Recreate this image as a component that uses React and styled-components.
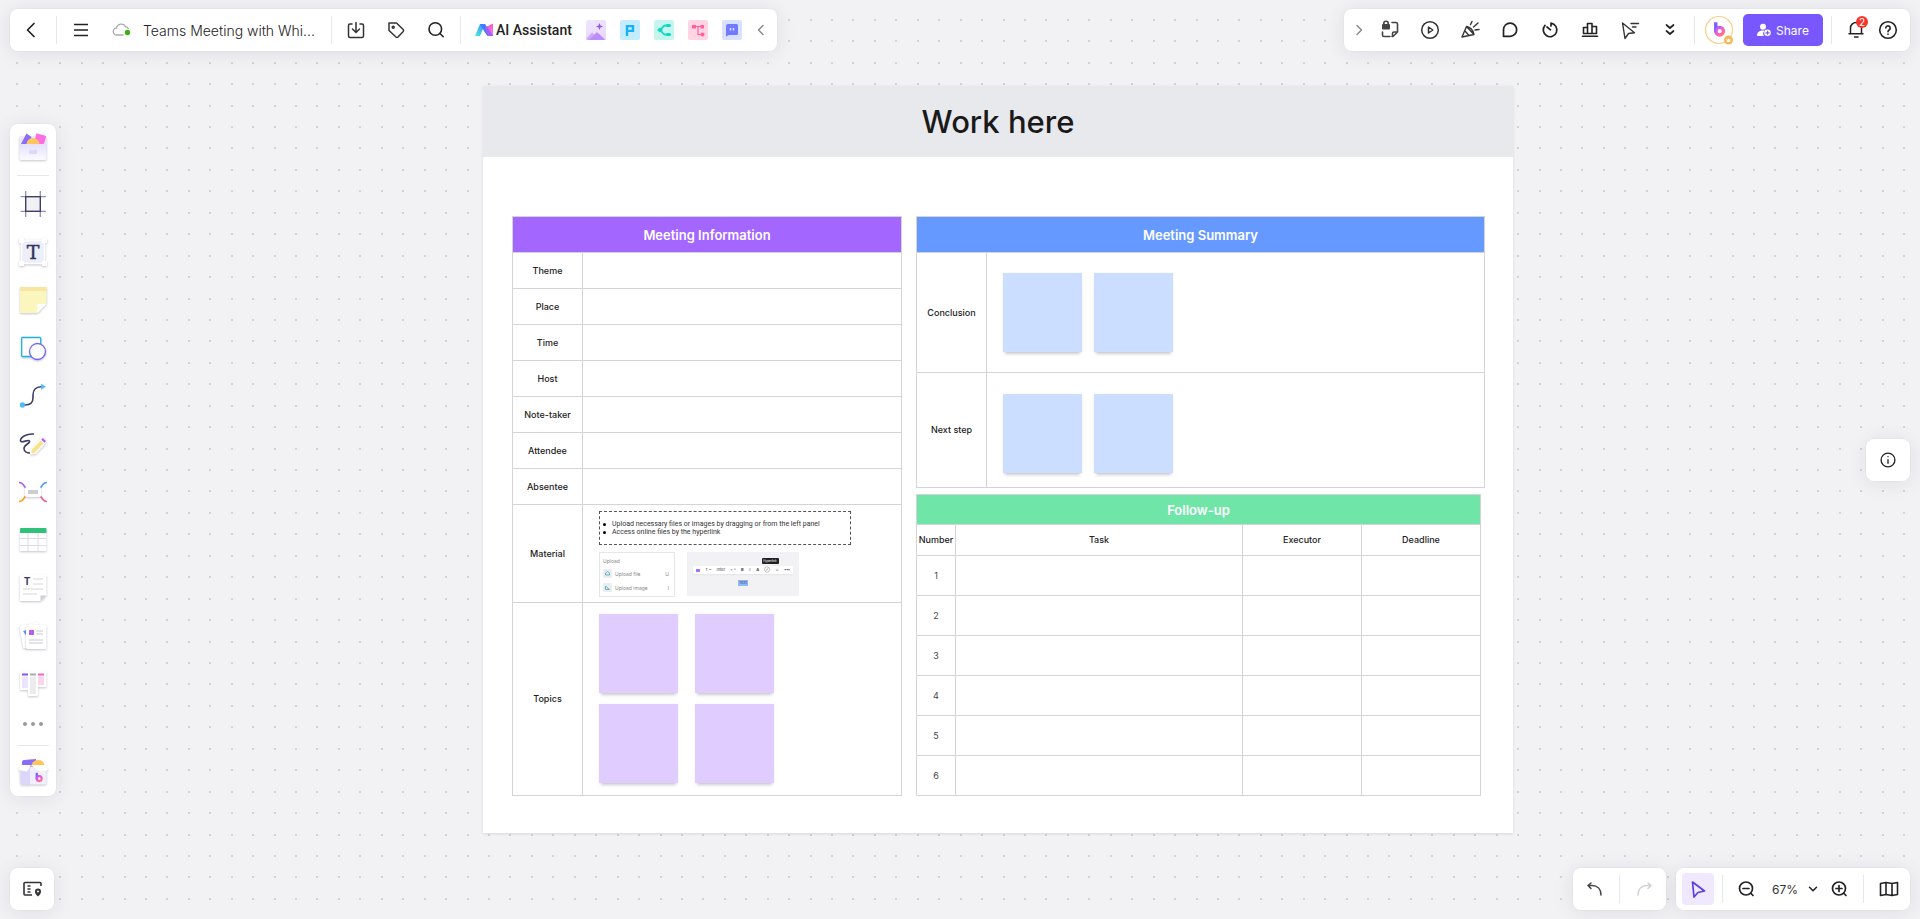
import React from "react";
import styled, { createGlobalStyle } from "styled-components";

const GlobalStyle = createGlobalStyle`
  *, *::before, *::after { box-sizing: border-box; }
  body { margin: 0; background: #f2f2f5; }
  body, button, select, table { font-family: Inter, "Liberation Sans", sans-serif; }
  button { border: 0; padding: 0; background: none; color: inherit; cursor: pointer; }
`;

/* ---------- page frame ---------- */

const Page = styled.div`
  position: relative;
  display: flex;
  flex-direction: column;
  min-height: 100vh;
  padding: 9px 10px;
  color: #222;
`;

const Grid = styled.svg`
  position: absolute;
  inset: 0;
  width: 100%;
  height: 100%;
`;

const BarRow = styled.div`
  position: relative;
  z-index: 1;
  display: flex;
  align-items: center;
  gap: 10px;
`;

const Spacer = styled.div`
  flex: 1;
`;

const Middle = styled.main`
  position: relative;
  flex: 1;
  display: flex;
  align-items: center;
`;

const Stage = styled.div`
  flex: 1;
  min-width: 0;
  padding: 0 353px 0 427px;
`;

const Bar = styled.div`
  display: flex;
  align-items: center;
  height: 42px;
  padding: 0 ${(p) => p.$right || 0}px 0 ${(p) => p.$left || 0}px;
  background: #fff;
  border-radius: 8px;
  box-shadow: 0 0 0 1px rgba(0, 0, 0, 0.02), 0 2px 20px rgba(30, 30, 50, 0.09);
`;

const Rule = styled.span`
  width: 1px;
  height: 28px;
  margin: 0 4px 0 ${(p) => p.$before || 4}px;
  background: #e7e7ea;
`;

const IconButton = styled.button`
  display: flex;
  align-items: center;
  justify-content: center;
  width: ${(p) => p.$w || 40}px;
  height: ${(p) => p.$h || 42}px;
  border-radius: 4px;
  color: ${(p) => p.$color || "#222"};
  background: ${(p) => p.$bg || "none"};
`;

const Stroke = styled.svg.attrs({
  viewBox: "0 0 24 24",
  fill: "none",
  stroke: "currentColor",
  strokeLinejoin: "round",
  "aria-hidden": true,
})`
  width: ${(p) => p.$s || 24}px;
  height: ${(p) => p.$s || 24}px;
  stroke-width: ${(p) => p.$weight || 1.4};
  stroke-linecap: ${(p) => (p.$butt ? "butt" : "round")};
  flex: none;
`;

/* ---------- top bar pieces ---------- */

const FileName = styled.button`
  display: flex;
  align-items: center;
  gap: 12px;
  padding: 0 11px 0 10px;
  height: 42px;
  font-size: 14px;
  font-weight: 300;
  color: #222;
  white-space: nowrap;
  text-align: left;
`;

const NameText = styled.span`
  width: 173px;
`;

const AiButton = styled.button`
  display: flex;
  align-items: center;
  gap: 3px;
  width: 121px;
  height: 42px;
  padding-left: 10px;
  font-family: Roboto, Inter, sans-serif;
  font-size: 14px;
  font-weight: 500;
  color: #222;
  white-space: nowrap;
`;

const TileRow = styled.div`
  display: flex;
  gap: 14px;
`;

const Tile = styled.button`
  width: 20px;
  height: 20px;
  border-radius: 2px;
  overflow: hidden;
  background: ${(p) => p.$bg};
  svg { display: block; }
`;

const ShareButton = styled.button`
  display: flex;
  align-items: center;
  justify-content: center;
  gap: 5px;
  width: 80px;
  height: 32px;
  margin: 0 4px;
  border-radius: 5px;
  background: #7857ff;
  color: #fff;
  font-size: 12px;
`;

const BellButton = styled(IconButton)`
  position: relative;
`;

const Badge = styled.span`
  position: absolute;
  top: 7px;
  right: 8px;
  width: 12px;
  height: 12px;
  border-radius: 50%;
  background: #f5352b;
  color: #fff;
  font-size: 10px;
  line-height: 12px;
  text-align: center;
`;

/* ---------- left tool rail ---------- */

const Rail = styled.nav`
  display: flex;
  flex-direction: column;
  align-items: center;
  width: 46px;
  background: #fff;
  border-radius: 8px;
  box-shadow: 0 0 0 1px rgba(0, 0, 0, 0.02), 0 2px 20px rgba(30, 30, 50, 0.09);
`;

const RailRule = styled.span`
  width: 32px;
  height: 1px;
  margin: 5px 0 4px;
  background: #e7e7ea;
`;

const Tool = styled.button`
  display: flex;
  align-items: center;
  justify-content: center;
  width: 46px;
  height: ${(p) => p.$h || 48}px;
  svg { overflow: visible; }
`;

const Shadowed = styled.g`
  filter: drop-shadow(0 1px 1px rgba(60, 60, 90, 0.3));
`;

/* ---------- board ---------- */

const Board = styled.section`
  background: #fff;
  box-shadow: 0 1px 3px rgba(0, 0, 0, 0.1);
`;

const BoardTitle = styled.h1`
  margin: 0;
  height: 71px;
  line-height: 72px;
  background: #e8e9ed;
  color: #1a1a1a;
  text-align: center;
  font-size: 31px;
  font-weight: 500;
`;

const Columns = styled.div`
  display: grid;
  grid-template-columns: 390fr 569fr;
  align-items: start;
  gap: 14px;
  padding: 59px 28px 37px 29px;
`;

const Stack = styled.div`
  display: flex;
  flex-direction: column;
  gap: 6px;
`;

const Inset = styled.div`
  padding-right: 4px;
`;

const Table = styled.table`
  width: 100%;
  table-layout: fixed;
  border-collapse: collapse;
  color: #222;
  font-size: 9px;
  th, td {
    padding: 0;
    border: 1px solid #d4d4d6;
    line-height: 12px;
  }
`;

const Col = styled.col`
  width: ${(p) => p.$w}px;
`;

const Row = styled.tr`
  height: ${(p) => p.$h}px;
`;

const Heading = styled.th`
  background: ${(p) => p.$bg};
  color: #fff;
  font-size: 13px;
  font-weight: 600;
`;

const Label = styled.th`
  font-weight: 500;
`;

const NumberCell = styled.td`
  text-align: center;
  color: #444;
`;

const ContentCell = styled.td`
  && {
    vertical-align: top;
    padding: ${(p) => p.$top}px 0 0 16px;
  }
`;

const Notes = styled.div`
  display: grid;
  grid-template-columns: 79px 79px;
  gap: 11px ${(p) => p.$gap}px;
`;

const Note = styled.div`
  height: 79px;
  background: ${(p) => p.$bg};
  box-shadow: 0 4px 3px -2px rgba(0, 0, 0, 0.2), 0 0 2px rgba(0, 0, 0, 0.06);
`;

const Tips = styled.ul`
  display: flex;
  flex-direction: column;
  justify-content: center;
  width: 252px;
  height: 34px;
  margin: 0 0 7px;
  padding: 0 0 0 3px;
  border: 1px dashed #555;
  color: #333;
  list-style: none;
  font-family: Roboto, Inter, sans-serif;
  font-size: 7px;
`;

const Tip = styled.li`
  display: flex;
  align-items: center;
  gap: 6px;
  line-height: 8px;
  white-space: nowrap;
  &::before {
    content: "";
    width: 3px;
    height: 3px;
    border-radius: 50%;
    background: #000;
  }
`;

const Shots = styled.div`
  display: flex;
  gap: 12px;
`;

const UploadShot = styled.div`
  display: flex;
  flex-direction: column;
  justify-content: space-between;
  width: 76px;
  height: 45px;
  padding: 5px 5px 4px 3px;
  border: 1px solid #e6e6e8;
  color: #888;
  font-size: 5px;
  line-height: 6px;
`;

const UploadLine = styled.div`
  display: flex;
  align-items: center;
  gap: 3px;
  span { flex: 1; }
  svg { display: block; }
`;

const LinkShot = styled.div`
  display: flex;
  flex-direction: column;
  align-items: center;
  width: 112px;
  height: 44px;
  padding-top: 6px;
  background: #f2f2f5;
  font-size: 4px;
  line-height: 6px;
`;

const ShotTip = styled.span`
  width: 17px;
  margin-left: 54px;
  border-radius: 1px;
  background: #222;
  color: #fff;
  font-size: 3px;
  text-align: center;
`;

const ShotBar = styled.div`
  display: flex;
  align-items: center;
  justify-content: space-between;
  width: 100px;
  height: 8px;
  margin-top: 2px;
  padding: 0 3px;
  border-radius: 1px;
  background: #fff;
  box-shadow: 0 1px 2px rgba(0, 0, 0, 0.06);
  color: #444;
`;

const ShotSwatch = styled.span`
  width: 4px;
  height: 3px;
  background: linear-gradient(90deg, #6b8bff, #e05af0);
`;

const ShotText = styled.span`
  margin-top: 6px;
  padding: 0 1px;
  background: #8fb8fa;
  color: #456;
`;

/* ---------- bottom bar pieces ---------- */

const ZoomField = styled.label`
  display: flex;
  align-items: center;
  width: 55px;
  color: #222;
`;

const ZoomSelect = styled.select`
  appearance: none;
  width: 55px;
  height: 32px;
  padding: 0 0 0 7px;
  border: 0;
  background: none;
  color: #333;
  font-size: 12px;
`;

const ZoomArrow = styled(Stroke)`
  margin-left: -14px;
  pointer-events: none;
`;

/* ---------- grid dots: 32 units apart at 67% zoom ---------- */

const STEP = 21.44;
const PERIOD = 25;
let dotPath = "";
for (let r = 0; r < PERIOD; r++) {
  for (let c = 0; c < PERIOD; c++) {
    dotPath += `M${Math.round(16.3 + c * STEP)} ${Math.round(18.8 + r * STEP)}h2v2h-2z`;
  }
}

function Dots() {
  const size = STEP * PERIOD;
  return (
    <Grid aria-hidden="true">
      <defs>
        <pattern id="dots" width={size} height={size} patternUnits="userSpaceOnUse">
          <path d={dotPath} fill="#d3d3d6" />
        </pattern>
      </defs>
      <rect width="100%" height="100%" fill="url(#dots)" />
    </Grid>
  );
}

/* ---------- tool drawings, 32 x 32 ---------- */

const Art = ({ children }) => (
  <svg width="32" height="32" viewBox="0 0 32 32" fill="none" aria-hidden="true">
    {children}
  </svg>
);

const TemplateArt = () => (
  <Art>
    <defs>
      <linearGradient id="drawer" x1="0" y1="0" x2="0" y2="1">
        <stop offset="0" stopColor="#e6e0fb" />
        <stop offset="1" stopColor="#fbfaff" />
      </linearGradient>
    </defs>
    <Shadowed>
      <rect x="2.5" y="5" width="27" height="24" rx="2" fill="#ebe8fb" />
    </Shadowed>
    <path d="M4 13 9.5 2.5 14.5 6 12 13z" fill="#8b6cf8" />
    <path d="m19.5 2.3 8.700 2.400a1 1 0 0 1 .8 1.300L27 13h-7.500l-2-3.500z" fill="#ff6ee0" />
    <path d="M9.500 13a6.500 6 0 0 1 13 0z" fill="#ffc65c" />
    <path d="M2.500 13h27v14a2 2 0 0 1-2 2h-23a2 2 0 0 1-2-2z" fill="url(#drawer)" />
    <rect x="12" y="19" width="8" height="4" rx="1" fill="#ddd8f8" />
  </Art>
);

const FrameArt = () => (
  <Art>
    <path d="M8.7 3v26M23.3 3v26M3.5 8.700h25.500M3.5 23.300h25.500" stroke="#8f8fb8" strokeWidth="1.300" />
    <rect x="8.7" y="8.7" width="14.6" height="14.6" fill="#f1f1f4" stroke="#3f3d66" strokeWidth="1.4" />
  </Art>
);

const TextArt = () => (
  <Art>
    <Shadowed>
      <rect x="4.5" y="4.5" width="23" height="23" fill="#eceef9" stroke="#fff" strokeWidth="1.5" />
      <path d="M2 2h5v5H2zM25 2h5v5h-5zM2 25h5v5H2zM25 25h5v5h-5z" fill="#fff" />
    </Shadowed>
    <text x="16" y="23" textAnchor="middle" fontFamily="DejaVu Serif, serif" fontSize="19" stroke="#34325c" strokeWidth="0.4" fill="#34325c">
      T
    </text>
  </Art>
);

const StickyArt = () => (
  <Art>
    <Shadowed>
      <path d="M3 3h26.500v17L20.500 29H3z" fill="#faf6bd" />
      <path d="M3 3h26.500v4H3z" fill="#f8e5a2" />
      <path d="M20.500 29v-9h9z" fill="#fff" />
    </Shadowed>
  </Art>
);

const ShapeArt = () => (
  <Art>
    <Shadowed>
      <rect x="4.7" y="5.5" width="19" height="19" rx="1" fill="#fff" stroke="#22b3d6" strokeWidth="1.3" />
      <circle cx="20.5" cy="19.5" r="8" fill="#fff" stroke="#6f66f6" strokeWidth="1.3" />
    </Shadowed>
  </Art>
);

const ConnectorArt = () => (
  <Art>
    <path d="M6 25h2c5 0 8-2 8-7v-3c0-5 3-8.300 8-8.300h1" stroke="#3f3d66" strokeWidth="1.6" />
    <circle cx="5.5" cy="25" r="2.7" fill="#4dbcff" />
    <path d="m24 3.700 5 3-5 3z" fill="#4dbcff" />
  </Art>
);

const PenArt = () => (
  <Art>
    <path
      d="M16.500 6C10 5.500 3.500 9 3.500 12.500c0 3.500 8-1.500 9 .5 1 2.500-5.500 3.500-5.500 7.500 0 3 3 4.500 6 4.500"
      stroke="#3f3d66"
      strokeWidth="1.6"
      strokeLinecap="round"
    />
    <Shadowed>
      <path d="m13 22 11-12.500q1.500-1 3 .5l2 2q1 1.500 0 3L18.500 26l-5.500.5z" fill="#fff" />
    </Shadowed>
    <path d="m14.500 22 9-9.500 3 3-9 9.500-3 .5z" fill="#f8e38d" />
    <path d="m24.300 11.500 1.500-1.500 3.200 3-1.700 1.700z" fill="#b45cf2" />
  </Art>
);

const MindArt = () => (
  <Art>
    <path d="M2 6.500c7 0 4 9 14 9.500" stroke="#b25ee6" strokeWidth="1.6" />
    <path d="M30 6.500c-7 0-4 9-14 9.500" stroke="#4a9bf8" strokeWidth="1.6" />
    <path d="M2 25.500c7 0 4-9 14-9.500" stroke="#fba51d" strokeWidth="1.6" />
    <path d="M30 25.500c-7 0-4-9-14-9.500" stroke="#ec5b9b" strokeWidth="1.6" />
    <Shadowed>
      <rect x="8" y="11" width="16" height="10" rx="1.5" fill="#fff" />
    </Shadowed>
    <rect x="11" y="14" width="10" height="4" fill="#cdcdcf" />
  </Art>
);

const TableArt = () => (
  <Art>
    <Shadowed>
      <rect x="3" y="4" width="26.5" height="23" rx="1" fill="#fff" />
    </Shadowed>
    <path d="M3 9h26.500V5a1 1 0 0 0-1-1H4a1 1 0 0 0-1 1z" fill="#30c27b" />
    <path d="M11 9v18M21 9v18M3 14.500h26.500M3 21.500h26.500" stroke="#dcdce0" />
  </Art>
);

const DocArt = () => (
  <Art>
    <Shadowed>
      <path d="M3 3h26.500v20.500L23.500 29H3z" fill="#fff" />
    </Shadowed>
    <path d="M23.500 29v-5.500h6z" fill="#cfcfd1" />
    <text x="10" y="13" textAnchor="middle" fontFamily="Inter, sans-serif" fontSize="10" fontWeight="700" fill="#3f3d66">
      T
    </text>
    <path d="M16 7h10M16 12h10M6 17h20M6 22h14" stroke="#d6d6d9" />
  </Art>
);

const CardsArt = () => (
  <Art>
    <Shadowed>
      <rect x="4" y="4" width="19" height="23" rx="1" fill="#fff" transform="rotate(-11 13 15)" />
    </Shadowed>
    <path d="m6 11 4-1v7z" fill="#4a9bf8" />
    <Shadowed>
      <rect x="9" y="5" width="20.5" height="24" rx="1.5" fill="#fff" />
    </Shadowed>
    <rect x="12" y="10" width="5" height="5" fill="#b95fec" />
    <path d="M19 11h7M19 14h7M12 20h14M12 23h14" stroke="#c9c9cc" />
  </Art>
);

const KanbanArt = () => (
  <Art>
    <Shadowed>
      <path d="M4 3h24.500a1 1 0 0 1 1 1v14a1 1 0 0 1-1 1H21v8a1 1 0 0 1-1 1h-8a1 1 0 0 1-1-1v-5H4a1 1 0 0 1-1-1V4a1 1 0 0 1 1-1z" fill="#fff" />
    </Shadowed>
    <path d="M5 5.500h6v2H5z" fill="#7b55f5" />
    <path d="M13 5.500h6v2h-6z" fill="#a9a9ac" />
    <path d="M21 5.500h6v2h-6z" fill="#f85fc0" />
    <path d="M5 8.500h6V20H5z" fill="#ebe3ff" />
    <path d="M13 8.500h6V26h-6z" fill="#ececee" />
    <path d="M21 8.500h6V17h-6z" fill="#fdd3ee" />
  </Art>
);

const MoreArt = () => (
  <Art>
    <g fill="#9a9a9d">
      <circle cx="8" cy="16" r="2" />
      <circle cx="16" cy="16" r="2" />
      <circle cx="24" cy="16" r="2" />
    </g>
  </Art>
);

const BrandB = ({ transform }) => (
  <g transform={transform} fill="none" strokeWidth="4">
    <path d="M5 1.500v11" stroke="#7a5cff" />
    <circle cx="9.5" cy="12" r="4.5" stroke="url(#brand)" />
  </g>
);

const BoxArt = () => (
  <Art>
    <path d="M5 9V5a2 2 0 0 1 2-2l12-1v8z" fill="#8b6cf8" />
    <path d="M14 10q1-7 7.500-7Q27 3 27.500 9z" fill="#ffc65c" />
    <Shadowed>
      <path d="M3.500 10h26v15.500a2 2 0 0 1-2 2h-22a2 2 0 0 1-2-2z" fill="#f1eefe" />
      <path d="M3.500 10H13v17.500H5.500a2 2 0 0 1-2-2z" fill="#ddd6fb" />
      <path d="M4 8h10l-4 6.500L1 13zM14 8h14l3.500 5-9 1.500z" fill="#fff" />
    </Shadowed>
    <BrandB transform="translate(17 15) scale(.55)" />
  </Art>
);

const TOOLS = [
  ["Frame", FrameArt],
  ["Text", TextArt],
  ["Sticky note", StickyArt],
  ["Shape", ShapeArt],
  ["Connector", ConnectorArt],
  ["Pen", PenArt],
  ["Mind map", MindArt],
  ["Table", TableArt],
  ["Document", DocArt],
  ["Cards", CardsArt],
  ["Kanban", KanbanArt],
];

/* ---------- data ---------- */

const INFO_ROWS = ["Theme", "Place", "Time", "Host", "Note-taker", "Attendee", "Absentee"];
const TASK_ROWS = [1, 2, 3, 4, 5, 6];

function TopLeft() {
  return (
    <Bar>
      <IconButton $w={42} aria-label="Back">
        <Stroke $weight={1.7}><path d="m15 5.500-6.500 6.500 6.500 6.500" /></Stroke>
      </IconButton>
      <Rule />
      <IconButton aria-label="Menu">
        <Stroke $weight={1.6} $butt><path d="M5 6.500h14M5 12h14M5 17.500h14" /></Stroke>
      </IconButton>
      <FileName>
        <svg width="20" height="20" viewBox="0 0 20 20" aria-hidden="true">
          <path d="M12.500 15H6a3.500 3.500 0 0 1-.5-7 4.800 4.800 0 0 1 9-1.300c1.500 0 2.500 1 3 2.300" fill="none" stroke="#aaa" strokeWidth="1.3" />
          <circle cx="16.5" cy="12.5" r="2.7" fill="#3eb010" />
        </svg>
        <NameText>Teams Meeting with Whi...</NameText>
      </FileName>
      <Rule />
      <IconButton aria-label="Import">
        <Stroke $weight={1.5} color="#333"><path d="M8 6H6a1.500 1.500 0 0 0-1.500 1.500V18A1.500 1.500 0 0 0 6 19.500h12a1.500 1.500 0 0 0 1.500-1.500V7.500A1.500 1.500 0 0 0 18 6h-2M12 4.500v9.500M8.500 11l3.500 3.500 3.500-3.500" /></Stroke>
      </IconButton>
      <IconButton aria-label="Tag">
        <Stroke $weight={1.5} color="#333">
          <path d="M5 5h7.500l6.700 6.500a1.500 1.500 0 0 1 0 2l-5.200 5.500a1.500 1.500 0 0 1-2 0L5 12.500z" />
          <circle cx="9.2" cy="9.2" r="1" />
        </Stroke>
      </IconButton>
      <IconButton aria-label="Search">
        <Stroke $weight={1.6}><circle cx="11.3" cy="11" r="6.3" /><path d="m16 15.500 3.200 3.200" /></Stroke>
      </IconButton>
      <Rule />
      <AiButton>
        <svg width="18" height="14" viewBox="0 0 18 14" aria-hidden="true">
          <defs>
            <linearGradient id="aiA" x1="0" y1="1" x2="1" y2="0">
              <stop offset="0" stopColor="#49f0d9" />
              <stop offset="1" stopColor="#3b86ff" />
            </linearGradient>
            <linearGradient id="aiB" x1="0" y1="0" x2="0" y2="1">
              <stop offset="0" stopColor="#ff5cb6" />
              <stop offset="1" stopColor="#e87cff" />
            </linearGradient>
          </defs>
          <path d="M5 1h5L5 13H0z" fill="url(#aiA)" />
          <path d="M12 3.500 18 .5V13h-4z" fill="url(#aiB)" />
          <path d="M5 1h5l8 12h-5.500L9 8z" fill="#3f7bff" />
          <path d="m10 5 2-2 6 10h-5z" fill="#a75cf5" />
        </svg>
        AI Assistant
      </AiButton>
      <TileRow>
        <Tile $bg="linear-gradient(160deg,#efe6ff,#e6d6fd)" aria-label="AI image">
          <svg width="20" height="20" viewBox="0 0 20 20">
            <path d="M0 19 6 12.500l4 4 3-2.500 7 6H0z" fill="#cda7fb" />
            <path d="m3 20 8-8 8 8z" fill="#bb8df9" />
            <path d="m13.500 3 1 2.500L17 6.500l-2.500 1-1 2.500-1-2.500-2.500-1 2.500-1z" fill="#9457ee" />
          </svg>
        </Tile>
        <Tile $bg="#c3ecff" aria-label="AI presentation">
          <svg width="20" height="20" viewBox="0 0 20 20" fill="none">
            <path d="M7 16V6.200h6v4.600H8" stroke="#17b0fb" strokeWidth="2.3" />
          </svg>
        </Tile>
        <Tile $bg="#c4f6ee" aria-label="AI mind map">
          <svg width="20" height="20" viewBox="0 0 20 20" fill="none">
            <path d="M14 5.500h-3c-3 0-2.500 4.500-6 4.500 3.500 0 3 4.500 6 4.500h3" stroke="#12d6c1" strokeWidth="1.8" />
            <path d="M3 10 6 7.500 9 10l-3 2.500z" fill="#12d6c1" />
            <rect x="12" y="4" width="5" height="3" rx="1.5" fill="#12d6c1" />
            <rect x="12" y="13" width="5" height="3" rx="1.5" fill="#12d6c1" />
          </svg>
        </Tile>
        <Tile $bg="#ffd5e3" aria-label="AI flowchart">
          <svg width="20" height="20" viewBox="0 0 20 20" fill="none">
            <path d="M5 6.500h10M10 6.500V14.500h4" stroke="#ff5f9c" strokeWidth="1.2" />
            <path d="M4 5h4v3.500H4zM12.500 5H16v3.500h-3.500z" fill="#ff5f9c" />
            <circle cx="14.5" cy="14.5" r="2" fill="#ff5f9c" />
          </svg>
        </Tile>
        <Tile $bg="#d8e2ff" aria-label="AI chat">
          <svg width="20" height="20" viewBox="0 0 20 20" fill="none">
            <path d="M6 4h8.500A1.500 1.500 0 0 1 16 5.500v8a1.500 1.500 0 0 1-1.500 1.500H7l-3 1.500V6a2 2 0 0 1 2-2z" fill="#727bff" />
            <path d="M8.500 8v2.500M11.500 8v2.500" stroke="#dfe4ff" strokeWidth="1.4" />
          </svg>
        </Tile>
      </TileRow>
      <IconButton $w={35} $color="#8a8a8e" aria-label="Collapse">
        <Stroke $s={24} $weight={1.5}><path d="m15 7.500-4.500 4.500 4.500 4.500" /></Stroke>
      </IconButton>
    </Bar>
  );
}

function TopRight() {
  return (
    <Bar $left={2} $right={10}>
      <IconButton $w={24} $color="#8a8a8e" aria-label="Collapse">
        <Stroke $s={24} $weight={1.5}><path d="m11 7.500 4.500 4.500-4.500 4.500" /></Stroke>
      </IconButton>
      <IconButton aria-label="Locked page">
        <Stroke $weight={1.6} color="#444">
          <rect x="4" y="6" width="8" height="5.5" rx="1" fill="#444" stroke="none" />
          <path d="M5.800 7V5.500a2.200 2.200 0 0 1 4.400 0V7" />
          <path d="M14 4.500h4A1.500 1.500 0 0 1 19.500 6v8l-4.500 4.500h-1M19.500 14H16a1.500 1.500 0 0 0-1.500 1.500v3M4.500 14V17A1.500 1.500 0 0 0 6 18.500h6" />
        </Stroke>
      </IconButton>
      <IconButton aria-label="Present">
        <Stroke $weight={1.5} color="#333"><circle cx="12" cy="12" r="8.3" /><path d="m10.500 9 4.300 3-4.300 3z" /></Stroke>
      </IconButton>
      <IconButton aria-label="Celebrate">
        <Stroke $weight={1.4} color="#333">
          <path d="M8.500 8.500 4 19l12-2.500zM8.500 8.500q6 1 7.500 8M7 13l4 4.500M12.500 6.500l1.500-3M15.500 9 20 5M17 12l4-.5" />
        </Stroke>
      </IconButton>
      <IconButton aria-label="Comments">
        <Stroke $weight={1.7}><path d="M5.500 18.300v-6.600A6.600 6.600 0 1 1 12 18.300z" /></Stroke>
      </IconButton>
      <IconButton aria-label="Timer">
        <Stroke $weight={1.7}><path d="M13 8V5.200a6.800 6.800 0 1 1-6 2.200M9 9l3.500 2.800" /></Stroke>
      </IconButton>
      <IconButton aria-label="Vote">
        <Stroke $weight={1.6}><path d="M5.500 15.500V9.500h4v6zM9.500 15.500V5.500h4.500v10zM14 15.500v-7h4.500v7zM4.500 18.300h15" /></Stroke>
      </IconButton>
      <IconButton aria-label="Follow cursor">
        <Stroke $weight={1.4} color="#333"><path d="M4.500 5 7 20.500l3.500-5 6-.8zM13 5.500h7.500M14.500 9H18" /></Stroke>
      </IconButton>
      <IconButton aria-label="More">
        <Stroke $weight={1.7}><path d="m8.500 7 3.500 3 3.500-3M8.500 13l3.500 3 3.500-3" /></Stroke>
      </IconButton>
      <Rule />
      <IconButton aria-label="Account">
        <svg width="30" height="30" viewBox="0 0 30 30" aria-hidden="true">
          <defs>
            <linearGradient id="brand" x1="0" y1="0" x2="1" y2="1">
              <stop offset="0" stopColor="#a05cff" />
              <stop offset="0.5" stopColor="#f45bd6" />
              <stop offset="1" stopColor="#ff7a6b" />
            </linearGradient>
          </defs>
          <circle cx="15" cy="15" r="13.5" fill="#fff" stroke="#f9cf86" strokeWidth="1.2" />
          <BrandB transform="translate(7.500 6) scale(.85)" />
          <circle cx="24.5" cy="25" r="4.5" fill="#f5b95b" />
          <path d="m22.500 24 1 .8 1-1.300 1 1.300 1-.8-.4 3h-3.200z" fill="#fff" />
        </svg>
      </IconButton>
      <ShareButton>
        <svg width="14" height="14" viewBox="0 0 14 14" fill="#fff" aria-hidden="true">
          <circle cx="6" cy="3.7" r="3" />
          <path d="M0 13c0-4 2.500-5.500 6-5.500l1.500.2A4 4 0 0 0 7 13z" />
          <path fillRule="evenodd" d="M10.500 6.500a3.300 3.300 0 1 1 0 6.600 3.300 3.300 0 0 1 0-6.600zm-.6 1.300v1.400H8.500v1.200h1.400v1.400h1.200v-1.400h1.400V9.200h-1.400V7.800z" />
        </svg>
        Share
      </ShareButton>
      <Rule />
      <BellButton aria-label="Notifications, 2 new">
        <Stroke $weight={1.5}><path d="M5 15.700h14M6.500 15.500V10a5.500 5.500 0 0 1 11 0v5.500M10.500 19h3.500" /></Stroke>
        <Badge>2</Badge>
      </BellButton>
      <IconButton $w={24} aria-label="Help">
        <Stroke $weight={1.6}>
          <circle cx="12" cy="12" r="8.3" />
          <path d="M9.800 10a2.200 2.200 0 1 1 3.300 2c-.7.400-1.100.8-1.100 1.700M12 16v.2" />
        </Stroke>
      </IconButton>
    </Bar>
  );
}

function ToolRail() {
  return (
    <Rail aria-label="Tools">
      <Tool $h={46} aria-label="Templates"><TemplateArt /></Tool>
      <RailRule />
      {TOOLS.map(([name, Drawing]) => (
        <Tool key={name} aria-label={name}><Drawing /></Tool>
      ))}
      <Tool $h={32} aria-label="More tools"><MoreArt /></Tool>
      <RailRule />
      <Tool $h={46} aria-label="Resources"><BoxArt /></Tool>
    </Rail>
  );
}

const UploadGlyph = ({ d }) => (
  <svg width="9" height="9" viewBox="0 0 9 9" aria-hidden="true">
    <rect width="9" height="9" rx="1" fill="#ececef" />
    <path d={d} fill="none" stroke="#5fb3c4" />
  </svg>
);

function Material() {
  return (
    <>
      <Tips>
        <Tip>Upload necessary files or images by dragging or from the left panel</Tip>
        <Tip>Access online files by the hyperlink</Tip>
      </Tips>
      <Shots>
        <UploadShot>
          <span>Upload</span>
          <UploadLine><UploadGlyph d="M2.500 6V4l2-1.500 2 1.500v2z" /><span>Upload file</span>U</UploadLine>
          <UploadLine><UploadGlyph d="M2.500 3v3.500h4L4 4.500z" /><span>Upload image</span>I</UploadLine>
        </UploadShot>
        <LinkShot>
          <ShotTip>Hyperlink</ShotTip>
          <ShotBar>
            <ShotSwatch />
            <span>T ~</span>
            <span>Inter</span>
            <span>+ ˅</span>
            <b>B</b>
            <span>≡</span>
            <b>A</b>
            <span>⊘</span>
            <span>☺</span>
            <b>•••</b>
          </ShotBar>
          <ShotText>Text</ShotText>
        </LinkShot>
      </Shots>
    </>
  );
}

const NoteSet = ({ count, color, gap }) => (
  <Notes $gap={gap}>
    {Array.from({ length: count }, (_, i) => <Note key={i} $bg={color} />)}
  </Notes>
);

function MeetingInformation() {
  return (
    <Table>
      <colgroup><Col $w={70} /><col /></colgroup>
      <tbody>
        <Row $h={36}><Heading colSpan={2} $bg="#a366ff">Meeting Information</Heading></Row>
        {INFO_ROWS.map((name) => (
          <Row key={name} $h={36}><Label scope="row">{name}</Label><td /></Row>
        ))}
        <Row $h={98}>
          <Label scope="row">Material</Label>
          <ContentCell $top={6}><Material /></ContentCell>
        </Row>
        <Row $h={193}>
          <Label scope="row">Topics</Label>
          <ContentCell $top={11}><NoteSet count={4} color="#e0ccff" gap={17} /></ContentCell>
        </Row>
      </tbody>
    </Table>
  );
}

function MeetingSummary() {
  return (
    <Table>
      <colgroup><Col $w={70} /><col /></colgroup>
      <tbody>
        <Row $h={36}><Heading colSpan={2} $bg="#6699ff">Meeting Summary</Heading></Row>
        <Row $h={120}>
          <Label scope="row">Conclusion</Label>
          <ContentCell $top={20}><NoteSet count={2} color="#ccdeff" gap={12} /></ContentCell>
        </Row>
        <Row $h={115}>
          <Label scope="row">Next step</Label>
          <ContentCell $top={21}><NoteSet count={2} color="#ccdeff" gap={12} /></ContentCell>
        </Row>
      </tbody>
    </Table>
  );
}

function FollowUp() {
  return (
    <Table>
      <colgroup><Col $w={39} /><col /><Col $w={119} /><Col $w={119} /></colgroup>
      <tbody>
        <Row $h={30}><Heading colSpan={4} $bg="#6fe5a8">Follow-up</Heading></Row>
        <Row $h={31}>
          {["Number", "Task", "Executor", "Deadline"].map((name) => (
            <Label key={name} scope="col">{name}</Label>
          ))}
        </Row>
        {TASK_ROWS.map((n) => (
          <Row key={n} $h={40}><NumberCell>{n}</NumberCell><td /><td /><td /></Row>
        ))}
      </tbody>
    </Table>
  );
}

function BottomBar() {
  return (
    <BarRow>
      <Bar>
        <IconButton $w={44} aria-label="Page list">
          <Stroke $weight={1.6} color="#333" $butt>
            <path d="M12 18H5a1 1 0 0 1-1-1V6.500a1 1 0 0 1 1-1h15a1 1 0 0 1 1 1V9M7.500 9h3M7.500 12h3M7.500 15h3" />
            <path d="M18 19.500c-2.500-2.500-3-3.500-3-5a3 3 0 0 1 6 0c0 1.500-.5 2.500-3 5zm0-6a1 1 0 1 0 0 2 1 1 0 0 0 0-2z" fill="#333" fillRule="evenodd" stroke="none" />
          </Stroke>
        </IconButton>
      </Bar>
      <Spacer />
      <Bar>
        <IconButton $w={42} $color="#444" aria-label="Undo">
          <Stroke $weight={1.5}><path d="M9 6 6 8.500l3 3M6 8.500h4c5.500 0 9 3.500 9 9.500" /></Stroke>
        </IconButton>
        <Rule />
        <IconButton $w={42} $color="#d0d0d3" aria-label="Redo">
          <Stroke $weight={1.5}><path d="m15 6 3 2.500-3 3M18 8.500h-4C8.500 8.500 5 12 5 18" /></Stroke>
        </IconButton>
      </Bar>
      <Bar $left={6}>
        <IconButton $w={32} $h={32} $bg="#f0e8ff" $color="#5b3fe0" aria-label="Select">
          <Stroke $weight={1.7}><path d="M6.500 5 18.500 14l-6.500 1.500L8 20z" /></Stroke>
        </IconButton>
        <Rule $before={8} />
        <IconButton $w={38} aria-label="Zoom out">
          <Stroke $weight={1.7}><circle cx="12" cy="11.5" r="6.5" /><path d="M9 11.500h6M17 16.500l2 2" /></Stroke>
        </IconButton>
        <ZoomField>
          <ZoomSelect defaultValue="67%" aria-label="Zoom level">
            <option>67%</option>
            <option>100%</option>
          </ZoomSelect>
          <ZoomArrow $s={14} $weight={2.6}><path d="m6 9 6 6 6-6" /></ZoomArrow>
        </ZoomField>
        <IconButton $w={39} aria-label="Zoom in">
          <Stroke $weight={1.7}><circle cx="11" cy="11.5" r="6.5" /><path d="M8 11.500h6M11 8.500v6M16 16.500l2 2" /></Stroke>
        </IconButton>
        <Rule />
        <IconButton $w={42} aria-label="Map">
          <Stroke $weight={1.6}><path d="M3.500 6.500 9 5.500l6 1 5.500-1v12l-5.500 1-6-1-5.500 1zM9 5.500v12M15 6.500v12" /></Stroke>
        </IconButton>
      </Bar>
    </BarRow>
  );
}

export default function App() {
  return (
    <>
      <GlobalStyle />
      <Page>
        <Dots />
        <BarRow as="header">
          <TopLeft />
          <Spacer />
          <TopRight />
        </BarRow>
        <Middle>
          <ToolRail />
          <Stage>
            <Board>
              <BoardTitle>Work here</BoardTitle>
              <Columns>
                <MeetingInformation />
                <Stack>
                  <MeetingSummary />
                  <Inset><FollowUp /></Inset>
                </Stack>
              </Columns>
            </Board>
          </Stage>
          <Bar>
            <IconButton $w={44} aria-label="Information">
              <Stroke $s={20} $weight={1.6}><circle cx="12" cy="12" r="8.3" /><path d="M12 11.500V16M12 8v.2" /></Stroke>
            </IconButton>
          </Bar>
        </Middle>
        <BottomBar />
      </Page>
    </>
  );
}
